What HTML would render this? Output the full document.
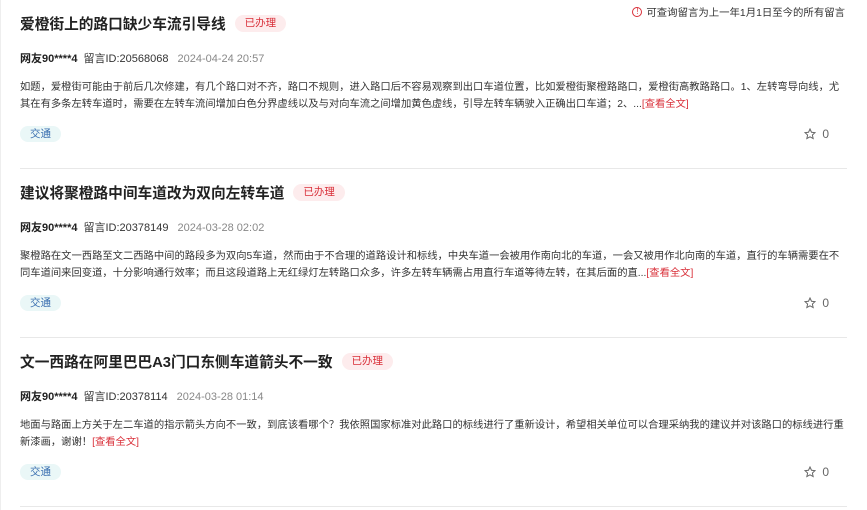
<!DOCTYPE html>
<html><head><meta charset="utf-8"><style>
*{margin:0;padding:0;box-sizing:border-box}
body{width:867px;height:510px;overflow:hidden;background:#fff;font-family:"Liberation Sans","Noto Sans CJK SC",sans-serif;color:#333;position:relative;border-left:1px solid #eee}
.tip{position:absolute;top:4px;right:22px;font-size:10.4px;color:#333;display:flex;align-items:center;gap:4px}
.tip i{display:inline-block;width:10px;height:10px;border:1px solid #d9303a;border-radius:50%;font-style:normal;color:#d9303a;font-size:8px;line-height:8px;text-align:center}
.card{position:absolute;left:19px;width:827px;height:169px;border-bottom:1px solid #e8e8e8}
.t{position:absolute;top:13px;left:0;font-size:14.7px;font-weight:bold;color:#222;display:flex;align-items:center;white-space:nowrap}
.badge{margin-left:9px;background:#fdeced;color:#d9303a;font-size:10.5px;font-weight:normal;border-radius:9px;padding:1px 10px;line-height:15px}
.m{position:absolute;top:50px;left:0;font-size:11px;white-space:nowrap}
.m b{color:#222}.m span{margin-left:6px}.m .d{color:#888;margin-left:9px}
.c{position:absolute;top:79px;left:0;width:827px;font-size:10.3px;line-height:17px;color:#333}
.c a{color:#d9303a;text-decoration:none}
.tag{position:absolute;top:126px;left:0;background:#eaf7f7;color:#3a6fb0;font-size:10.5px;border-radius:8px;padding:0 10px;line-height:16px}
.star{position:absolute;top:126px;right:18px;font-size:12px;color:#666;line-height:16px}
.star svg{vertical-align:-2px;margin-right:6px}
</style></head><body>
<div class="tip"><i>!</i>可查询留言为上一年1月1日至今的所有留言</div>

<div class="card" style="top:0">
<div class="t">爱橙街上的路口缺少车流引导线<span class="badge">已办理</span></div>
<div class="m"><b>网友90****4</b><span>留言ID:20568068</span><span class="d">2024-04-24 20:57</span></div>
<div class="c">如题，爱橙街可能由于前后几次修建，有几个路口对不齐，路口不规则，进入路口后不容易观察到出口车道位置，比如爱橙街聚橙路路口，爱橙街高教路路口。1、左转弯导向线，尤其在有多条左转车道时，需要在左转车流间增加白色分界虚线以及与对向车流之间增加黄色虚线，引导左转车辆驶入正确出口车道；2、...<a>[查看全文]</a></div>
<div class="tag">交通</div>
<div class="star"><svg width="12" height="12" viewBox="0 0 24 24"><path d="M12 2l3 6.5 7 .8-5.2 4.8 1.5 7L12 17.6 5.7 21.1l1.5-7L2 9.3l7-.8z" fill="none" stroke="#666" stroke-width="2"/></svg>0</div>
</div>

<div class="card" style="top:169px">
<div class="t">建议将聚橙路中间车道改为双向左转车道<span class="badge">已办理</span></div>
<div class="m"><b>网友90****4</b><span>留言ID:20378149</span><span class="d">2024-03-28 02:02</span></div>
<div class="c">聚橙路在文一西路至文二西路中间的路段多为双向5车道，然而由于不合理的道路设计和标线，中央车道一会被用作南向北的车道，一会又被用作北向南的车道，直行的车辆需要在不同车道间来回变道，十分影响通行效率；而且这段道路上无红绿灯左转路口众多，许多左转车辆需占用直行车道等待左转，在其后面的直...<a>[查看全文]</a></div>
<div class="tag">交通</div>
<div class="star"><svg width="12" height="12" viewBox="0 0 24 24"><path d="M12 2l3 6.5 7 .8-5.2 4.8 1.5 7L12 17.6 5.7 21.1l1.5-7L2 9.3l7-.8z" fill="none" stroke="#666" stroke-width="2"/></svg>0</div>
</div>

<div class="card" style="top:338px">
<div class="t">文一西路在阿里巴巴A3门口东侧车道箭头不一致<span class="badge">已办理</span></div>
<div class="m"><b>网友90****4</b><span>留言ID:20378114</span><span class="d">2024-03-28 01:14</span></div>
<div class="c">地面与路面上方关于左二车道的指示箭头方向不一致，到底该看哪个？我依照国家标准对此路口的标线进行了重新设计，希望相关单位可以合理采纳我的建议并对该路口的标线进行重新漆画，谢谢！<a>[查看全文]</a></div>
<div class="tag">交通</div>
<div class="star"><svg width="12" height="12" viewBox="0 0 24 24"><path d="M12 2l3 6.5 7 .8-5.2 4.8 1.5 7L12 17.6 5.7 21.1l1.5-7L2 9.3l7-.8z" fill="none" stroke="#666" stroke-width="2"/></svg>0</div>
</div>
</body></html>
